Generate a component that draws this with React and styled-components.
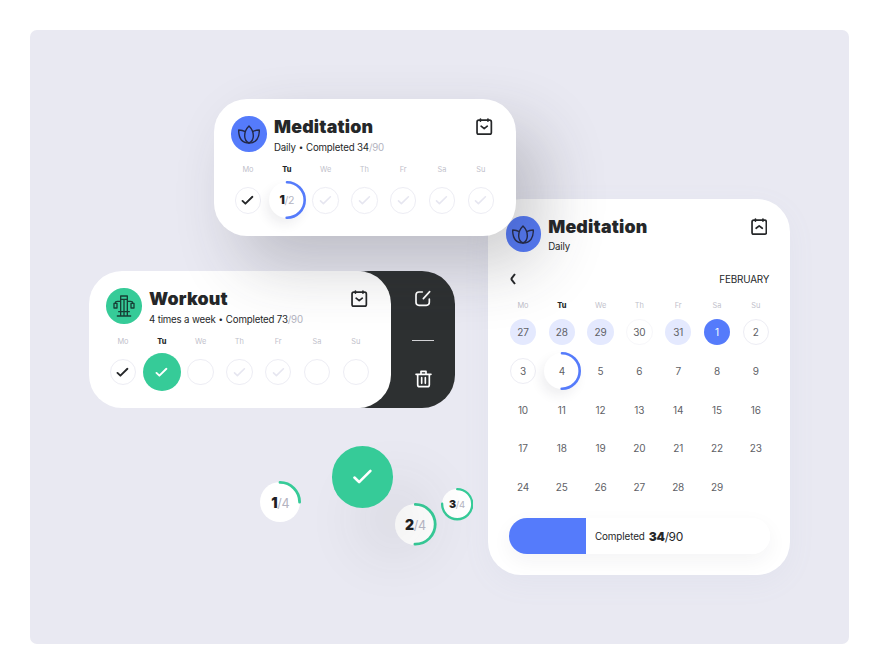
import React from "react";
import styled, { createGlobalStyle, css } from "styled-components";

const BLUE = "#557bfb";
const GREEN = "#36cb98";
const INK = "#252729";

const Global = createGlobalStyle`
  * { box-sizing: border-box; }
  body { margin: 0; background: #fff; font-family: Inter, "Liberation Sans", sans-serif; color: ${INK}; }
`;

const Page = styled.main`
  width: 880px;
  height: 669px;
  padding: 30px 31px 25px 30px;
  overflow: hidden;
`;

const Canvas = styled.div`
  position: relative;
  width: 819px;
  height: 614px;
  border-radius: 7px;
  background: #e9e9f2;
  overflow: hidden;
`;

const Placed = styled.div`
  position: absolute;
  left: ${(p) => p.$x}px;
  top: ${(p) => p.$y}px;
`;

const Card = styled.section`
  width: 302.4px;
  height: ${(p) => p.$h}px;
  padding-top: 17.4px;
  border-radius: 33px;
  background: #fff;
  box-shadow: ${(p) => p.$shadow || "none"};
`;

const Header = styled.header`
  display: flex;
  height: 36px;
  padding: 0 23.4px 0 17.6px;
`;

const Badge = styled.div`
  display: grid;
  place-items: center;
  flex: none;
  width: 35.6px;
  height: 35.6px;
  border-radius: 50%;
  background: ${(p) => p.$color};
`;

const Heading = styled.div`
  flex: 1;
  margin-left: 7px;
  white-space: nowrap;
`;

const Title = styled.h2`
  margin: 1px 0 0;
  font-size: 17.8px;
  line-height: 20px;
  font-weight: 900;
  letter-spacing: ${(p) => p.$spacing}px;
`;

const Subtitle = styled.p`
  margin: 3.4px 0 0;
  font-size: 9.7px;
  line-height: 12px;
  letter-spacing: -0.17px;
`;

const Bullet = styled.span`
  font-size: 8px;
  padding: 0 0.4px;
  vertical-align: 0.5px;
`;

const Muted = styled.span`
  color: #b3b3c0;
`;

const CalendarSlot = styled.div`
  margin-top: 2px;
  height: 18px;
`;

const Week = styled.div`
  display: grid;
  grid-template-columns: repeat(7, 38.8px);
  padding-left: ${(p) => p.$inset || 14.8}px;
  justify-items: center;
  align-items: center;
  grid-auto-rows: ${(p) => p.$row}px;
  margin-top: ${(p) => p.$gap || 0}px;
`;

const DayName = styled.span`
  font-size: 7.4px;
  line-height: 10px;
  color: ${(p) => (p.$active ? INK : "#bfbfcb")};
  font-weight: ${(p) => (p.$active ? 800 : 400)};
`;

const fills = {
  plain: css`border: 1px solid transparent;`,
  outline: css`border: 1.2px solid #ededf4; background: #fff;`,
  faint: css`border: 1px solid #f7f7fa;`,
  soft: css`background: #e4e9fe;`,
  solid: css`background: ${BLUE}; color: #fff;`,
};

const Dot = styled.div`
  display: grid;
  place-items: center;
  width: 26.4px;
  height: 26.4px;
  border-radius: 50%;
  font-size: 10px;
  letter-spacing: -0.1px;
  color: #606166;
  ${(p) => fills[p.$fill]}
`;

const Disc = styled.div`
  display: grid;
  place-items: center;
  width: ${(p) => p.$size}px;
  height: ${(p) => p.$size}px;
  border-radius: 50%;
  background: ${GREEN};
  box-shadow: ${(p) => p.$shadow || "none"};
`;

const RingBox = styled.div`
  display: grid;
  place-items: center;
  width: ${(p) => p.$size}px;
  height: ${(p) => p.$size}px;
  & > * { grid-area: 1 / 1; }
`;

const RingFace = styled.div`
  width: calc(100% - 2px);
  height: calc(100% - 2px);
  border-radius: 50%;
  background: #fff;
  box-shadow: ${(p) => (p.$raised ? "-3px 6px 12px rgba(40,40,60,.08)" : "none")};
`;

const RingText = styled.span`
  z-index: 1;
  font-size: ${(p) => p.$fs}px;
  letter-spacing: -0.3px;
  white-space: nowrap;
  color: #606166;
  b { font-weight: 900; color: #1e2022; }
`;

const Fraction = styled(Muted)`
  font-size: 0.9em;
`;

const Actions = styled.div`
  display: flex;
  flex-direction: column;
  align-items: center;
  width: 120px;
  height: 136.6px;
  padding: 19px 0 16px 57px;
  border-radius: 33px;
  background: #2d3031;
`;

const Divider = styled.div`
  width: 21.5px;
  height: 1px;
  margin: 33px 0 29.4px;
  background: #d2d2d5;
`;

const MonthBar = styled.div`
  display: flex;
  justify-content: space-between;
  align-items: center;
  height: 14px;
  margin-top: 19.4px;
  padding: 0 21px 0 21.6px;
  font-size: 9.9px;
  letter-spacing: -0.15px;
`;

const ProgressTrack = styled.div`
  display: flex;
  align-items: center;
  width: 261px;
  height: 35.6px;
  border-radius: 18px;
  overflow: hidden;
  background: #fff;
`;

const ProgressShadow = styled.div`
  width: 261px;
  margin: 11.6px 0 0 21px;
  border-radius: 18px;
  box-shadow: 0 7px 20px rgba(40, 40, 50, 0.05);
`;

const ProgressFill = styled.div`
  width: 77px;
  height: 100%;
  background: ${BLUE};
`;

const ProgressLabel = styled.span`
  margin-left: 9px;
  font-size: 9.9px;
  letter-spacing: -0.14px;
`;

const ProgressCount = styled.span`
  margin: 1px 0 0 4.2px;
  font-size: 12px;
  letter-spacing: -0.35px;
  b { font-weight: 900; }
`;

const Lotus = () => (
  <svg width="22" height="19" viewBox="0 0 66 57" fill="none" stroke="#23294a" strokeWidth="4.2" strokeLinejoin="round">
    <path d="M33 3C25 11 20 21 20 32c0 10 5 18 13 22 8-4 13-12 13-22 0-11-5-21-13-29z" />
    <path d="M22 20C17 17 9 15 2 15c0 22 8 39 31 39 23 0 31-17 31-39-7 0-15 2-20 5" />
  </svg>
);

const Machine = () => (
  <svg width="22" height="22" viewBox="0 0 66 66" fill="none" stroke="#173f36" strokeWidth="4" strokeLinejoin="round" strokeLinecap="round">
    <path d="M23 62V3h20v59M23 13h20M23 19H13c-4 0-6 2-6 5M43 19h10c4 0 6 2 6 5M33 13v49M17 50h32M13 63h40" />
    <path d="M3 25h9v14H3zM54 25h9v14h-9z" />
  </svg>
);

const CalendarIcon = ({ up }) => (
  <svg width="16.4" height="17.4" viewBox="0 0 48 51" fill="none" stroke={INK} strokeWidth="5" strokeLinecap="round" strokeLinejoin="round">
    <rect x="3" y="6.5" width="42" height="41" rx="5" />
    <path d="M13 3v6M35 3v6" />
    <path d={up ? "M15 30l9-7 9 7" : "M15 24l9 7 9-7"} />
  </svg>
);

const Check = ({ color, size = 13, weight = 1.9 }) => (
  <svg width={size} height={size * 0.8} viewBox="0 0 13 10.4" fill="none" stroke={color} strokeWidth={weight} strokeLinecap="round" strokeLinejoin="round">
    <path d="M1.5 5.9L4.4 8.7 11.4 1.8" />
  </svg>
);

const EditIcon = () => (
  <svg width="16" height="17" viewBox="0 0 48 51" fill="none" stroke="#fff" strokeWidth="5" strokeLinecap="round" strokeLinejoin="round">
    <path d="M22 6H12c-6 0-9 3-9 9v22c0 6 3 9 9 9h22c6 0 9-3 9-9V27M25 26L44 5" />
  </svg>
);

const TrashIcon = () => (
  <svg width="17" height="18" viewBox="0 0 51 54" fill="none" stroke="#fff" strokeWidth="5" strokeLinecap="round" strokeLinejoin="round">
    <path d="M3 13h45M18 12V4h15v8M8 14v30c0 4 2 6 6 6h23c4 0 6-2 6-6V14M20 23v17M31 23v17" />
  </svg>
);

const ChevronLeft = () => (
  <svg width="6" height="13" viewBox="0 0 6 13" fill="none" stroke={INK} strokeWidth="2">
    <path d="M5 2L1.8 6.1Q1.2 7 1.8 7.9L5 12" />
  </svg>
);

function Ring({ size, portion, color, stroke = 2.6, fs, done, total, raised, children }) {
  const r = (size - stroke) / 2;
  const c = 2 * Math.PI * r;
  return (
    <RingBox $size={size}>
      <RingFace $raised={raised} />
      <svg width={size} height={size} viewBox={`0 0 ${size} ${size}`}>
        <circle
          cx={size / 2}
          cy={size / 2}
          r={r}
          fill="none"
          stroke={color}
          strokeWidth={stroke}
          strokeLinecap="round"
          strokeDasharray={`${c * portion} ${c}`}
          transform={`rotate(-90 ${size / 2} ${size / 2})`}
        />
      </svg>
      <RingText $fs={fs}>
        {children || (<><b>{done}</b><Fraction>/{total}</Fraction></>)}
      </RingText>
    </RingBox>
  );
}

const names = ["Mo", "Tu", "We", "Th", "Fr", "Sa", "Su"];

const DayNames = ({ gap, inset }) => (
  <Week $row={10} $gap={gap} $inset={inset}>
    {names.map((n) => (
      <DayName key={n} $active={n === "Tu"}>{n}</DayName>
    ))}
  </Week>
);

function CardHeader({ color, icon, title, spacing, up, children }) {
  return (
    <Header>
      <Badge $color={color}>{icon}</Badge>
      <Heading>
        <Title $spacing={spacing}>{title}</Title>
        <Subtitle>{children}</Subtitle>
      </Heading>
      <CalendarSlot><CalendarIcon up={up} /></CalendarSlot>
    </Header>
  );
}

const DayMark = ({ mark }) => (
  <Dot $fill="outline">
    {mark === "done" && <Check color={INK} />}
    {mark === "planned" && <Check color="#e6e6f0" weight={1.6} />}
  </Dot>
);

const fillFor = { 27: "soft", 28: "soft", 29: "soft", 30: "faint", 31: "soft" };
const dates = [
  ...[27, 28, 29, 30, 31].map((d) => ({ d, fill: fillFor[d] })),
  ...Array.from({ length: 29 }, (_, i) => ({
    d: i + 1,
    fill: i === 0 ? "solid" : i < 3 ? "outline" : "plain",
  })),
];

export default function App() {
  return (
    <>
      <Global />
      <Page>
        <Canvas>
          <Placed $x={458} $y={169}>
            <Card $h={376} $shadow="0 8px 30px rgba(130,150,185,.06)">
              <CardHeader color={BLUE} icon={<Lotus />} title="Meditation" spacing={0.2} up>Daily</CardHeader>
              <MonthBar><ChevronLeft /><span>FEBRUARY</span></MonthBar>
              <DayNames gap={14.8} inset={15.6} />
              <Week $row={38.75} $gap={2.2} $inset={15.6}>
                {dates.map(({ d, fill }, i) =>
                  d === 4 ? (
                    <Ring key={i} size={38} portion={0.5} color={BLUE} fs={10} raised>4</Ring>
                  ) : (
                    <Dot key={i} $fill={fill}>{d}</Dot>
                  )
                )}
              </Week>
              <ProgressShadow>
                <ProgressTrack>
                  <ProgressFill />
                  <ProgressLabel>Completed</ProgressLabel>
                  <ProgressCount><b>34</b>/90</ProgressCount>
                </ProgressTrack>
              </ProgressShadow>
            </Card>
          </Placed>

          <Placed $x={304.6} $y={241}>
            <Actions><EditIcon /><Divider /><TrashIcon /></Actions>
          </Placed>
          <Placed $x={58.8} $y={241}>
            <Card $h={136.6}>
              <CardHeader color={GREEN} icon={<Machine />} title="Workout" spacing={0.18}>
                4 times a week <Bullet>•</Bullet> Completed 73<Muted>/90</Muted>
              </CardHeader>
              <DayNames gap={12.2} />
              <Week $row={38.8} $gap={6.2}>
                <DayMark mark="done" />
                <Disc $size={38}><Check color="#fff" /></Disc>
                <DayMark />
                <DayMark mark="planned" />
                <DayMark mark="planned" />
                <DayMark />
                <DayMark />
              </Week>
            </Card>
          </Placed>

          <Placed $x={183.8} $y={69}>
            <Card $h={136.8} $shadow="26px 30px 64px rgba(50,52,60,.24)">
              <CardHeader color={BLUE} icon={<Lotus />} title="Meditation" spacing={0.2}>
                Daily <Bullet>•</Bullet> Completed 34<Muted>/90</Muted>
              </CardHeader>
              <DayNames gap={12.4} />
              <Week $row={38.8} $gap={6.2}>
                <DayMark mark="done" />
                <Ring size={38} portion={0.5} color={BLUE} fs={11.8} done={1} total={2} raised />
                {names.slice(2).map((n) => <DayMark key={n} mark="planned" />)}
              </Week>
            </Card>
          </Placed>

          <Placed $x={229.3} $y={451.2}>
            <Ring size={42} portion={0.25} color={GREEN} stroke={2.8} fs={14} done={1} total={4} />
          </Placed>
          <Placed $x={364.2} $y={473}>
            <Ring size={42.6} portion={0.5} color={GREEN} stroke={2.8} fs={14} done={2} total={4} />
          </Placed>
          <Placed $x={410.7} $y={458.3}>
            <Ring size={32.4} portion={0.75} color={GREEN} stroke={2.3} fs={10.6} done={3} total={4} />
          </Placed>
          <Placed $x={301.8} $y={416}>
            <Disc $size={61.6} $shadow="32px 42px 60px 6px rgba(50,54,60,.09)"><Check color="#fff" size={21} weight={1.6} /></Disc>
          </Placed>
        </Canvas>
      </Page>
    </>
  );
}
